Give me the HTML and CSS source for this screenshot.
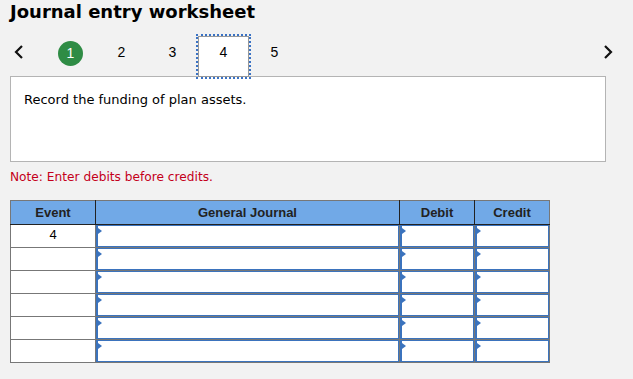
FILE: index.html
```html
<!DOCTYPE html>
<html lang="en">

<head>
    <meta charset="UTF-8">
    <title>Journal entry worksheet</title>
    <link rel="stylesheet" href="styles.css">
</head>

<body>
    <div class="worksheet">
        <h1 class="title">Journal entry worksheet</h1>

        <div class="tabs">
            <a href="javascript:;" class="arrow">
                <svg width="10" height="14" viewBox="0 0 10 14"><polyline points="8,1 2,7 8,13" /></svg>
            </a>
            <ol class="steps">
                <li class="step done"><span>1</span></li>
                <li class="step">2</li>
                <li class="step">3</li>
                <li class="step on">4</li>
                <li class="step">5</li>
            </ol>
            <a href="javascript:;" class="arrow">
                <svg width="10" height="14" viewBox="0 0 10 14"><polyline points="2,1 8,7 2,13" /></svg>
            </a>
        </div>

        <div class="prompt">Record the funding of plan assets.</div>

        <p class="note">Note: Enter debits before credits.</p>

        <table class="journal">
            <thead>
                <tr>
                    <th class="col-event">Event</th>
                    <th class="col-account">General Journal</th>
                    <th class="col-amount">Debit</th>
                    <th class="col-amount">Credit</th>
                </tr>
            </thead>
            <tbody>
                <tr>
                    <td class="event">4</td>
                    <td><div class="field"></div></td>
                    <td><div class="field"></div></td>
                    <td><div class="field"></div></td>
                </tr>
                <tr>
                    <td class="event"></td>
                    <td><div class="field"></div></td>
                    <td><div class="field"></div></td>
                    <td><div class="field"></div></td>
                </tr>
                <tr>
                    <td class="event"></td>
                    <td><div class="field"></div></td>
                    <td><div class="field"></div></td>
                    <td><div class="field"></div></td>
                </tr>
                <tr>
                    <td class="event"></td>
                    <td><div class="field"></div></td>
                    <td><div class="field"></div></td>
                    <td><div class="field"></div></td>
                </tr>
                <tr>
                    <td class="event"></td>
                    <td><div class="field"></div></td>
                    <td><div class="field"></div></td>
                    <td><div class="field"></div></td>
                </tr>
                <tr>
                    <td class="event"></td>
                    <td><div class="field"></div></td>
                    <td><div class="field"></div></td>
                    <td><div class="field"></div></td>
                </tr>
            </tbody>
        </table>
    </div>
</body>

</html>
```

FILE: styles.css
```css
* {
    margin: 0px;
    padding: 0px;
    box-sizing: border-box;
}

body {
    background-color: #f2f2f2;
    font-family: "DejaVu Sans", Verdana, sans-serif;
    color: #000;
}

.worksheet {
    padding-left: 10px;
}

.title {
    font-size: 18px;
    font-weight: bold;
    line-height: 24px;
    height: 24px;
}

/* 步骤导航 */
.tabs {
    width: 606px;
    height: 40px;
    margin-top: 12px;
    display: flex;
    align-items: flex-start;
    position: relative;
    z-index: 2;
}

.arrow {
    width: 17px;
    height: 32px;
    display: flex;
    align-items: center;
    justify-content: center;
}

.arrow polyline {
    fill: none;
    stroke: #111;
    stroke-width: 2.2;
}

.steps {
    list-style: none;
    display: flex;
    margin-left: 18px;
    flex: 1;
    font-family: "Liberation Sans", Arial, sans-serif;
    font-size: 14px;
}

.step {
    width: 51px;
    height: 32px;
    line-height: 32px;
    text-align: center;
}

.step.done span {
    display: inline-block;
    width: 25px;
    height: 25px;
    line-height: 25px;
    border-radius: 50%;
    background-color: #2f8c45;
    color: #fff;
    vertical-align: middle;
}

.step.on {
    height: 41px;
    line-height: 30px;
    background-color: #fff;
    border: 1px solid #999;
    outline: 2px dotted #3a72c4;
}

.prompt {
    width: 596px;
    height: 86px;
    padding: 15px 13px;
    background-color: #fff;
    border: 1px solid #b4b4b4;
    font-size: 13px;
    line-height: 16px;
}

.note {
    margin-top: 7px;
    font-size: 12.2px;
    line-height: 16px;
    color: #c4001a;
}

/* 分录表 */
.journal {
    margin-top: 15px;
    border-collapse: collapse;
    font-family: "Liberation Sans", Arial, sans-serif;
    font-size: 13px;
}

.journal th {
    height: 24px;
    background-color: #71a9e7;
    color: #222;
    font-weight: bold;
    border: 1px solid #222;
    border-top-color: #777;
}

.journal th:first-child {
    border-left-color: #777;
}

.journal th:last-child {
    border-right-color: #777;
}

.col-event {
    width: 85px;
}

.col-account {
    width: 304px;
}

.col-amount {
    width: 75px;
}

.journal td {
    height: 23px;
    padding: 0;
    background-color: #fff;
    border: 1px solid #777;
}

.journal td.event {
    text-align: center;
    vertical-align: top;
    line-height: 20px;
    font-size: 13px;
}

.field {
    height: 22px;
    border: 1px solid #3b73bd;
    border-left-width: 2px;
    position: relative;
}

.field::before {
    content: "";
    position: absolute;
    left: 0;
    top: 2px;
    border-left: 4px solid #3b73bd;
    border-top: 3px solid transparent;
    border-bottom: 3px solid transparent;
}
```
